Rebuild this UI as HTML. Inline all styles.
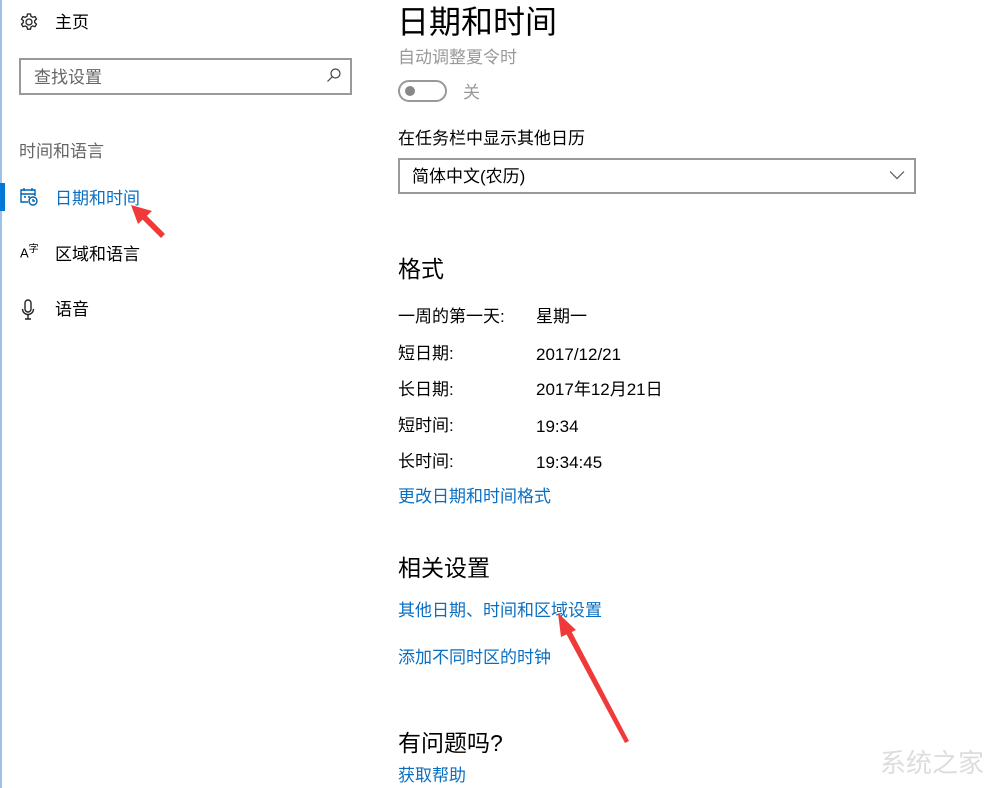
<!DOCTYPE html>
<html><head><meta charset="utf-8"><style>
body{margin:0;width:1000px;height:788px;background:#fff;position:relative;overflow:hidden;font-family:"Liberation Sans","Noto Sans CJK SC",sans-serif;color:#000}
.a{position:absolute;white-space:nowrap;line-height:1.2}
.b{color:#0a6fc2;font-size:17px;margin-top:3px}
.t{font-size:17px;margin-top:3px}
.h{font-size:23px;margin-top:3px}
</style></head><body>
<div class="a" style="left:0;top:0;width:2px;height:788px;background:#9cc3e6"></div>
<div class="a" style="left:0;top:183px;width:5px;height:28px;background:#0078d7"></div>
<svg class="a" style="left:19px;top:12px" width="20" height="20" viewBox="0 0 20 20" fill="none" stroke="#222" stroke-width="1.3"><circle cx="10" cy="10" r="3"/><path d="M8.5 2h3l.5 2.3 1.8 1 2.2-.8 1.5 2.6-1.8 1.5v2l1.8 1.5-1.5 2.6-2.2-.8-1.8 1-.5 2.3h-3l-.5-2.3-1.8-1-2.2.8-1.5-2.6 1.8-1.5v-2L2.5 7.1 4 4.5l2.2.8 1.8-1z"/></svg>
<div class="a t" style="left:55px;top:10px">主页</div>
<div class="a" style="left:19px;top:58px;width:329px;height:33px;border:2px solid #999"></div>
<div class="a t" style="left:34px;top:65px;color:#666">查找设置</div>
<svg class="a" style="left:326px;top:67px" width="16" height="16" viewBox="0 0 16 16" fill="none" stroke="#444" stroke-width="1.2"><circle cx="9.5" cy="6.5" r="4.5"/><path d="M6.3 9.7 1.5 14.5"/></svg>
<div class="a t" style="left:19px;top:139px;color:#666">时间和语言</div>
<svg class="a" style="left:19px;top:187px" width="20" height="20" viewBox="0 0 20 20" fill="none" stroke="#0063b1" stroke-width="1.4"><path d="M9 15H2V3h14v6M2 7h14M5 1v3M13 1v3M5 10h2M9 10h2"/><circle cx="14" cy="14" r="4"/><path d="M14 12v2h2"/></svg>
<div class="a b" style="left:55px;top:186px">日期和时间</div>
<div class="a" style="left:20px;top:244px;font-size:13px">A<sup style="font-size:10px">字</sup></div>
<div class="a t" style="left:55px;top:242px">区域和语言</div>
<svg class="a" style="left:21px;top:299px" width="14" height="22" viewBox="0 0 14 22" fill="none" stroke="#222" stroke-width="1.4"><rect x="4" y="1" width="6" height="12" rx="3"/><path d="M1.5 10a5.5 5.5 0 0 0 11 0M7 16v4M4 20h6"/></svg>
<div class="a t" style="left:55px;top:297px">语音</div>

<div class="a" style="left:397px;top:3px;font-size:32px">日期和时间</div>
<div class="a t" style="left:398px;top:45px;color:#999">自动调整夏令时</div>
<div class="a" style="left:398px;top:80px;width:49px;height:22px;border:2px solid #999;border-radius:12px;box-sizing:border-box"></div>
<div class="a" style="left:405px;top:86px;width:10px;height:10px;border-radius:50%;background:#888"></div>
<div class="a t" style="left:463px;top:80px;color:#999">关</div>
<div class="a t" style="left:398px;top:126px">在任务栏中显示其他日历</div>
<div class="a" style="left:398px;top:158px;width:514px;height:32px;border:2px solid #999"></div>
<div class="a t" style="left:412px;top:164px">简体中文(农历)</div>
<svg class="a" style="left:889px;top:170px" width="16" height="10" viewBox="0 0 16 10" fill="none" stroke="#555" stroke-width="1.2"><path d="M1 1.5 8 8.5 15 1.5"/></svg>

<div class="a h" style="left:398px;top:253px">格式</div>
<div class="a t" style="left:398px;top:304px">一周的第一天:</div><div class="a t" style="left:536px;top:304px">星期一</div>
<div class="a t" style="left:398px;top:341px">短日期:</div><div class="a t" style="left:536px;top:342px">2017/12/21</div>
<div class="a t" style="left:398px;top:377px">长日期:</div><div class="a t" style="left:536px;top:377px">2017年12月21日</div>
<div class="a t" style="left:398px;top:413px">短时间:</div><div class="a t" style="left:536px;top:414px">19:34</div>
<div class="a t" style="left:398px;top:449px">长时间:</div><div class="a t" style="left:536px;top:450px">19:34:45</div>
<div class="a b" style="left:398px;top:484px">更改日期和时间格式</div>

<div class="a h" style="left:398px;top:552px">相关设置</div>
<div class="a b" style="left:398px;top:598px">其他日期、时间和区域设置</div>
<div class="a b" style="left:398px;top:645px">添加不同时区的时钟</div>
<div class="a h" style="left:398px;top:727px">有问题吗?</div>
<div class="a b" style="left:398px;top:763px">获取帮助</div>

<svg class="a" style="left:0;top:0" width="1000" height="788">
<path d="M161 238 L137 214 L141 210 L165 234Z" fill="#f03a3a"/>
<path d="M131 205 L152 211 L138 224Z" fill="#f03a3a"/>
<path d="M625 743 L562 626 L567 623 L629 741Z" fill="#f03a3a"/>
<path d="M558 613 L576 630 L561 637Z" fill="#f03a3a"/>
<text x="880" y="772" font-size="26" fill="#ddd" font-family="Liberation Sans,Noto Sans CJK SC,sans-serif">系统之家</text>
</svg>
</body></html>
